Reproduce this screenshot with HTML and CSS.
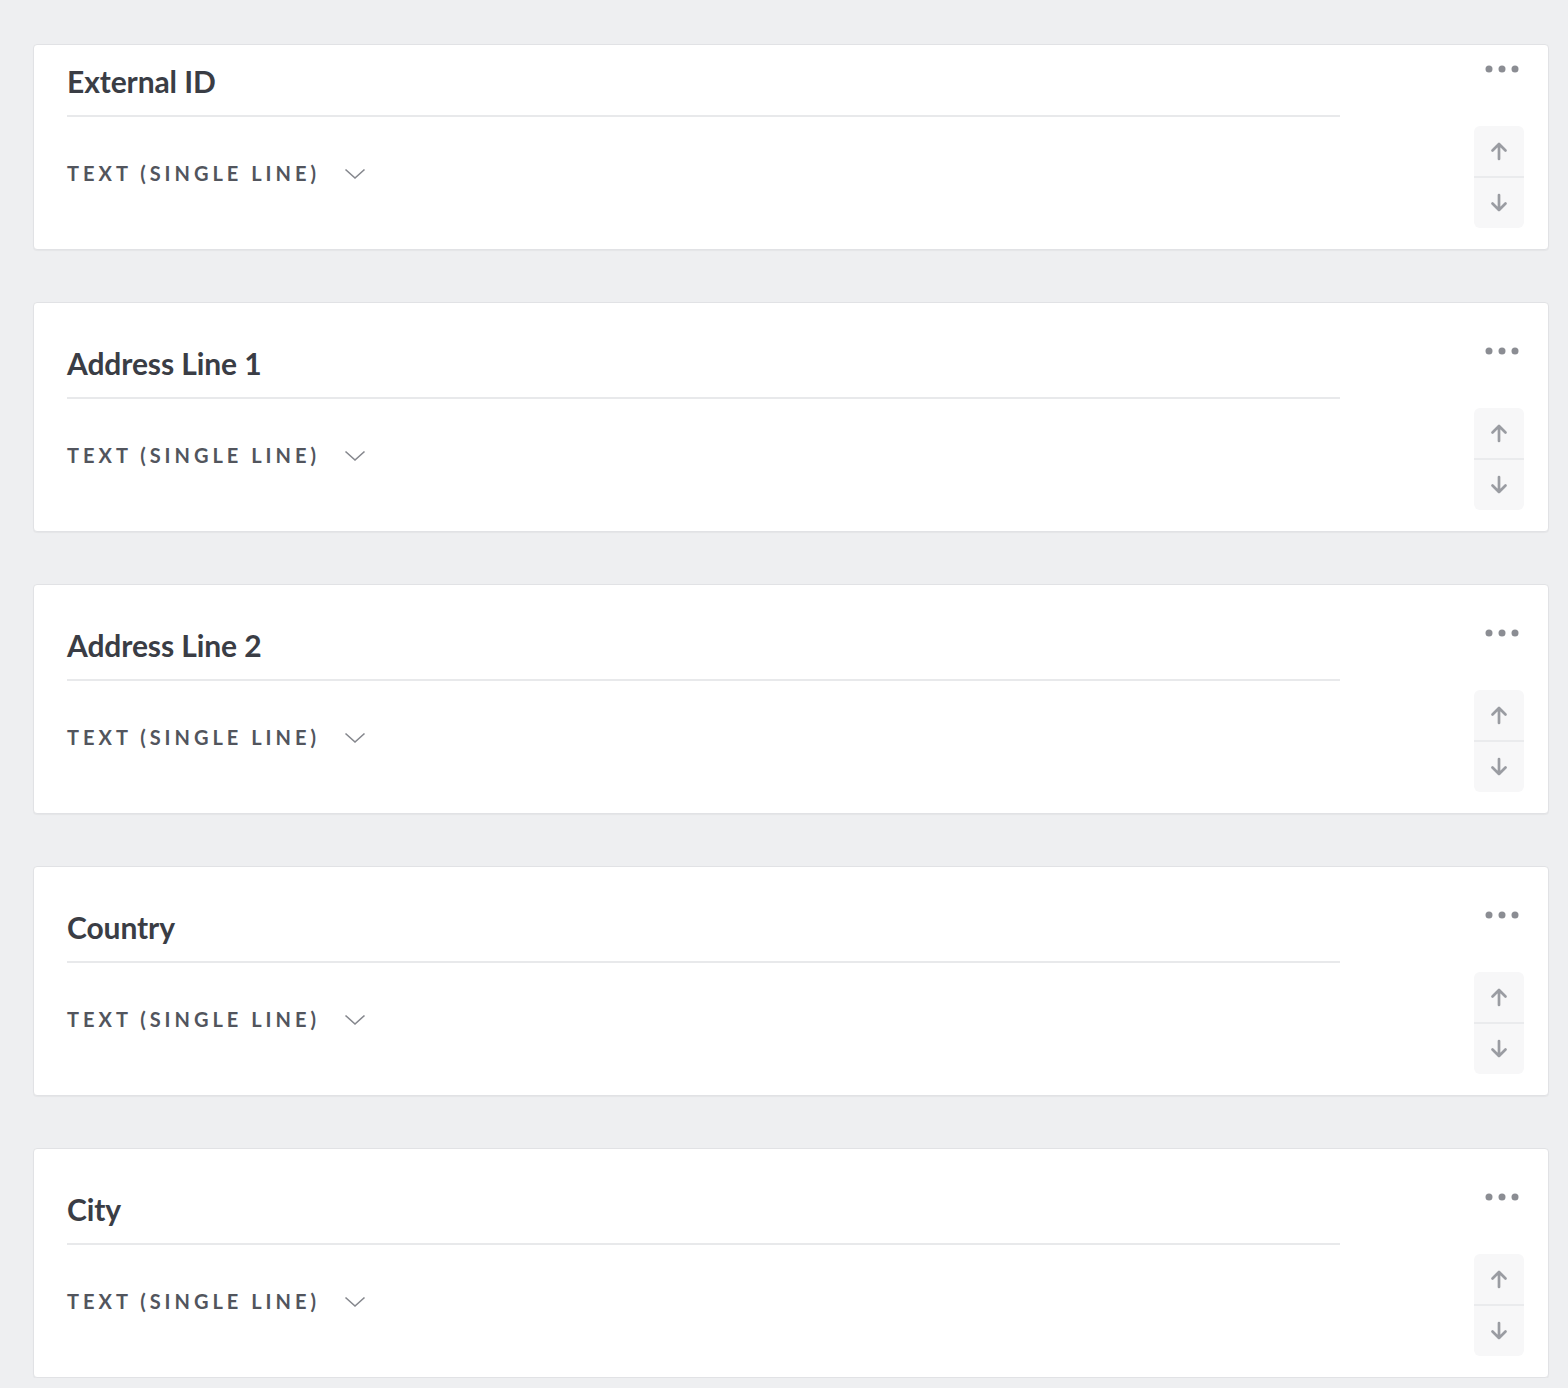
FILE: index.html
```html
<!DOCTYPE html>
<html lang="en">
<head>
<meta charset="utf-8">
<title>Fields</title>
<link rel="stylesheet" href="styles.css">
</head>
<body>
<main class="list">
  <section class="card card--first">
    <div class="card-main">
      <h2 class="field-title">External ID</h2>
      <div class="field-type"><span class="type-label">Text (single line)</span>
        <svg class="chev" viewBox="0 0 22 12" width="22" height="12"><polyline points="1.5,1.5 11,10 20.5,1.5"/></svg></div>
    </div>
    <div class="card-side">
      <svg class="dots" viewBox="0 0 36 8" width="36" height="8"><circle cx="4" cy="4" r="3.5"/><circle cx="17" cy="4" r="3.5"/><circle cx="30" cy="4" r="3.5"/></svg>
      <div class="mover">
        <button class="mv"><svg viewBox="0 0 20 20" width="20" height="20"><path d="M10 18V3M3.5 9.5L10 3l6.5 6.5"/></svg></button>
        <button class="mv"><svg viewBox="0 0 20 20" width="20" height="20"><path d="M10 2v15M3.5 10.5L10 17l6.5-6.5"/></svg></button>
      </div>
    </div>
  </section>
  <section class="card">
    <div class="card-main">
      <h2 class="field-title">Address Line 1</h2>
      <div class="field-type"><span class="type-label">Text (single line)</span>
        <svg class="chev" viewBox="0 0 22 12" width="22" height="12"><polyline points="1.5,1.5 11,10 20.5,1.5"/></svg></div>
    </div>
    <div class="card-side">
      <svg class="dots" viewBox="0 0 36 8" width="36" height="8"><circle cx="4" cy="4" r="3.5"/><circle cx="17" cy="4" r="3.5"/><circle cx="30" cy="4" r="3.5"/></svg>
      <div class="mover">
        <button class="mv"><svg viewBox="0 0 20 20" width="20" height="20"><path d="M10 18V3M3.5 9.5L10 3l6.5 6.5"/></svg></button>
        <button class="mv"><svg viewBox="0 0 20 20" width="20" height="20"><path d="M10 2v15M3.5 10.5L10 17l6.5-6.5"/></svg></button>
      </div>
    </div>
  </section>
  <section class="card">
    <div class="card-main">
      <h2 class="field-title">Address Line 2</h2>
      <div class="field-type"><span class="type-label">Text (single line)</span>
        <svg class="chev" viewBox="0 0 22 12" width="22" height="12"><polyline points="1.5,1.5 11,10 20.5,1.5"/></svg></div>
    </div>
    <div class="card-side">
      <svg class="dots" viewBox="0 0 36 8" width="36" height="8"><circle cx="4" cy="4" r="3.5"/><circle cx="17" cy="4" r="3.5"/><circle cx="30" cy="4" r="3.5"/></svg>
      <div class="mover">
        <button class="mv"><svg viewBox="0 0 20 20" width="20" height="20"><path d="M10 18V3M3.5 9.5L10 3l6.5 6.5"/></svg></button>
        <button class="mv"><svg viewBox="0 0 20 20" width="20" height="20"><path d="M10 2v15M3.5 10.5L10 17l6.5-6.5"/></svg></button>
      </div>
    </div>
  </section>
  <section class="card">
    <div class="card-main">
      <h2 class="field-title">Country</h2>
      <div class="field-type"><span class="type-label">Text (single line)</span>
        <svg class="chev" viewBox="0 0 22 12" width="22" height="12"><polyline points="1.5,1.5 11,10 20.5,1.5"/></svg></div>
    </div>
    <div class="card-side">
      <svg class="dots" viewBox="0 0 36 8" width="36" height="8"><circle cx="4" cy="4" r="3.5"/><circle cx="17" cy="4" r="3.5"/><circle cx="30" cy="4" r="3.5"/></svg>
      <div class="mover">
        <button class="mv"><svg viewBox="0 0 20 20" width="20" height="20"><path d="M10 18V3M3.5 9.5L10 3l6.5 6.5"/></svg></button>
        <button class="mv"><svg viewBox="0 0 20 20" width="20" height="20"><path d="M10 2v15M3.5 10.5L10 17l6.5-6.5"/></svg></button>
      </div>
    </div>
  </section>
  <section class="card">
    <div class="card-main">
      <h2 class="field-title">City</h2>
      <div class="field-type"><span class="type-label">Text (single line)</span>
        <svg class="chev" viewBox="0 0 22 12" width="22" height="12"><polyline points="1.5,1.5 11,10 20.5,1.5"/></svg></div>
    </div>
    <div class="card-side">
      <svg class="dots" viewBox="0 0 36 8" width="36" height="8"><circle cx="4" cy="4" r="3.5"/><circle cx="17" cy="4" r="3.5"/><circle cx="30" cy="4" r="3.5"/></svg>
      <div class="mover">
        <button class="mv"><svg viewBox="0 0 20 20" width="20" height="20"><path d="M10 18V3M3.5 9.5L10 3l6.5 6.5"/></svg></button>
        <button class="mv"><svg viewBox="0 0 20 20" width="20" height="20"><path d="M10 2v15M3.5 10.5L10 17l6.5-6.5"/></svg></button>
      </div>
    </div>
  </section>
</main>
</body>
</html>
```

FILE: styles.css
```css
* { box-sizing: border-box; }
html, body { margin: 0; padding: 0; }
body {
  background: #eeeff1;
  font-family: Lato, "Open Sans", "Liberation Sans", sans-serif;
  color: #3b3e46;
}
.list {
  display: flex;
  flex-direction: column;
  gap: 52px;
  padding: 44px 19px 0 33px;
}
.card {
  display: flex;
  height: 230px;
  background: #fff;
  border: 1px solid #e1e2e5;
  border-radius: 4px;
  box-shadow: 0 1px 1px rgba(0,0,0,0.04);
}
.card--first { height: 206px; }
.card-main {
  flex: 1;
  padding: 42px 0 0 33px;
}
.card--first .card-main { padding-top: 18px; }
.field-title {
  margin: 0;
  width: 1273px;
  font-size: 30px;
  line-height: 36px;
  font-weight: 700;
  letter-spacing: -0.1px;
  color: #3a3d45;
  padding-bottom: 16px;
  border-bottom: 2px solid #e8e9eb;
}
.field-type {
  display: flex;
  align-items: center;
  gap: 24px;
  margin-top: 44px;
  height: 24px;
}
.type-label {
  text-transform: uppercase;
  font-size: 20px;
  font-weight: 700;
  letter-spacing: 4px;
  color: #52555d;
}
.chev {
  fill: none;
  stroke: #85878d;
  stroke-width: 1.6;
  margin-top: 2px;
}
.card-side {
  display: flex;
  flex-direction: column;
  align-items: flex-end;
  padding: 44px 24px 0 0;
}
.card--first .card-side { padding-top: 20px; }
.dots {
  fill: #8b8d93;
  margin-right: 3px;
}
.mover {
  margin-top: 53px;
  width: 50px;
  height: 102px;
  background: #f7f7f8;
  border-radius: 6px;
  display: flex;
  flex-direction: column;
}
.mv {
  flex: 1;
  border: 0;
  background: transparent;
  padding: 0;
  display: flex;
  align-items: center;
  justify-content: center;
}
.mv + .mv { border-top: 2px solid #eaebed; }
.mv svg {
  fill: none;
  stroke: #9a9ca2;
  stroke-width: 2.7;
  stroke-linecap: round;
  stroke-linejoin: round;
}
```
